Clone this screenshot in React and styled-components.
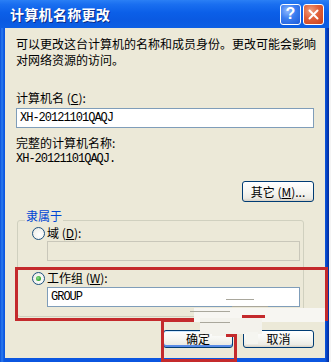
import styled, { createGlobalStyle } from 'styled-components'

const GlobalStyle = createGlobalStyle`
    html, body {
        margin: 0;
        padding: 0;
        background: #f4f4f4;
    }
    body {
        width: 331px;
        height: 362px;
        overflow: hidden;
        font-family: 'Noto Sans CJK SC', 'DejaVu Sans', sans-serif;
        font-size: 12px;
    }
`

const Window = styled.div`
    position: relative;
    width: 329px;
    height: 362px;
    display: flex;
    flex-direction: column;
    background: linear-gradient(90deg, #0a4fd8 0px, #2c7cf0 2px, #0b56e0 4px, #0b56e0 calc(100% - 4px), #002a9c 100%);
    overflow: hidden;
`

const TitleBar = styled.div`
    height: 28px;
    flex: none;
    display: flex;
    align-items: center;
    justify-content: space-between;
    padding: 0 5px 0 10px;
    background: linear-gradient(180deg, #2a7ff5 0%, #1a6ff0 15%, #0b5fe8 45%, #0a5ae2 70%, #0d5fe4 100%);
    box-sizing: border-box;
`

const Title = styled.div`
    color: #ffffff;
    font-weight: 700;
    font-size: 14px;
    letter-spacing: 0.3px;
    text-shadow: 1px 1px 0 #0a2d8a;
`

const TitleButtons = styled.div`
    display: flex;
    gap: 2px;
`

const CaptionButton = styled.div`
    width: 21px;
    height: 21px;
    box-sizing: border-box;
    border: 1px solid #ffffff;
    border-radius: 3px;
    display: flex;
    align-items: center;
    justify-content: center;
    color: #ffffff;
    font-family: 'Liberation Sans', sans-serif;
    font-weight: 700;
    font-size: 16px;
    background: ${p => p.$close
        ? 'radial-gradient(circle at 35% 30%, #f0a080 0%, #e0603a 45%, #c8401c 100%)'
        : 'radial-gradient(circle at 35% 30%, #8fb8ff 0%, #3b7df0 45%, #1c5ad8 100%)'};
`

const Body = styled.div`
    flex: 1;
    margin: 0 4px 4px 5px;
    background: #ece9d8;
    padding: 8px 11px 0 11px;
    display: flex;
    flex-direction: column;
    color: #000000;
`

const Text = styled.div`
    line-height: 16px;
    margin-top: ${p => p.$mt || 0}px;
    white-space: nowrap;
`

const Mono = styled.div`
    font-family: 'Liberation Mono', 'DejaVu Sans Mono', monospace;
    font-size: 12px;
    letter-spacing: -1px;
    line-height: 16px;
    margin-top: ${p => p.$mt || 0}px;
`

const Input = styled.div`
    height: 20px;
    box-sizing: border-box;
    margin-top: ${p => p.$mt || 0}px;
    margin-left: ${p => p.$ml || 0}px;
    width: ${p => p.$w ? `${p.$w}px` : 'auto'};
    border: 1px solid ${p => p.$disabled ? '#c9c7ba' : '#7f9db9'};
    background: ${p => p.$disabled ? '#ece9d8' : '#ffffff'};
    font-family: 'Liberation Mono', 'DejaVu Sans Mono', monospace;
    font-size: 12px;
    letter-spacing: -1px;
    line-height: 18px;
    padding-left: 3px;
`

const ButtonRow = styled.div`
    display: flex;
    justify-content: flex-end;
    gap: ${p => p.$gap || 0}px;
    margin-top: ${p => p.$mt || 0}px;
`

const Button = styled.div`
    width: ${p => p.$w}px;
    height: ${p => p.$h}px;
    box-sizing: border-box;
    border: 1px solid #003c74;
    border-radius: 3px;
    background: linear-gradient(180deg, #ffffff 0%, #f6f6f2 50%, #ecebe4 85%, #d6d0c5 100%);
    box-shadow: ${p => p.$default ? 'inset 0 -2px 0 #5a8ce6, inset 0 1px 0 #cee7ff' : 'none'};
    display: flex;
    align-items: center;
    justify-content: center;
    line-height: 16px;
    white-space: nowrap;
`

const GroupBox = styled.div`
    margin: 18px 10px 0 1px;
    border: 1px solid #d0d0bf;
    border-radius: 3px;
    padding: 0 0 9px 14px;
    display: flex;
    flex-direction: column;
`

const Legend = styled.div`
    align-self: flex-start;
    margin: -13px 0 0 -7px;
    padding: 0 1px;
    background: #ece9d8;
    color: #0046d5;
    line-height: 16px;
`

const RadioRow = styled.div`
    display: flex;
    align-items: center;
    gap: 2px;
    margin-top: ${p => p.$mt || 0}px;
    line-height: 16px;
`

const Radio = styled.span`
    width: 13px;
    height: 13px;
    box-sizing: border-box;
    border-radius: 50%;
    border: 1px solid #1c5180;
    background: radial-gradient(circle at 60% 60%, #ffffff 0%, #f2f2ee 60%, #d8d8d0 100%);
    display: flex;
    align-items: center;
    justify-content: center;

    &::after {
        content: '';
        display: ${p => p.$checked ? 'block' : 'none'};
        width: 5px;
        height: 5px;
        border-radius: 50%;
        background: radial-gradient(circle at 40% 40%, #8ee08e 0%, #2aa02a 70%, #1a7a1a 100%);
    }
`

const Overlay = styled.div`
    position: absolute;
    pointer-events: none;
`

const RedFrame = styled(Overlay)`
    border: 3px solid #c42a2c;
    box-sizing: border-box;
`

const RedBar = styled(Overlay)`
    height: 3px;
    background: #c42a2c;
`

const Smudge = styled(Overlay)`
    background: ${p => p.$bg || '#f7f6f2'};
`

const SmudgeLine = styled(Overlay)`
    height: 1px;
    background: #a9a79c;
`

export default function App() {
    return (
        <>
            <GlobalStyle />
            <Window>
                <TitleBar>
                    <Title>计算机名称更改</Title>
                    <TitleButtons>
                        <CaptionButton>?</CaptionButton>
                        <CaptionButton $close>
                            <svg width="11" height="11" viewBox="0 0 11 11">
                                <path d="M1.5 1.5 L9.5 9.5 M9.5 1.5 L1.5 9.5" stroke="#ffffff" strokeWidth="2" strokeLinecap="round" />
                            </svg>
                        </CaptionButton>
                    </TitleButtons>
                </TitleBar>
                <Body>
                    <Text>可以更改这台计算机的名称和成员身份。更改可能会影响</Text>
                    <Text>对网络资源的访问。</Text>
                    <Text $mt={22}>计算机名 (<u>C</u>):</Text>
                    <Input $mt={2}>XH-20121101QAQJ</Input>
                    <Text $mt={7}>完整的计算机名称:</Text>
                    <Mono>XH-20121101QAQJ.</Mono>
                    <ButtonRow $mt={14}>
                        <Button $w={72} $h={21}>其它 (<u>M</u>)...</Button>
                    </ButtonRow>
                    <GroupBox>
                        <Legend>隶属于</Legend>
                        <RadioRow $mt={1}>
                            <Radio />
                            <span>域 (<u>D</u>):</span>
                        </RadioRow>
                        <Input $disabled $ml={15} $w={253} />
                        <RadioRow $mt={9}>
                            <Radio $checked />
                            <span>工作组 (<u>W</u>):</span>
                        </RadioRow>
                        <Input $mt={1} $ml={15} $w={253}>GROUP</Input>
                    </GroupBox>
                    <ButtonRow $mt={13} $gap={10}>
                        <Button $w={70} $h={18} $default>确定</Button>
                        <Button $w={71} $h={18}>取消</Button>
                    </ButtonRow>
                </Body>

                <RedFrame style={{ left: 15, top: 267, width: 313, height: 54 }} />
                <RedFrame style={{ left: 161, top: 319, width: 76, height: 43 }} />
                <Smudge style={{ left: 194, top: 308, width: 131, height: 14 }} />
                <Smudge style={{ left: 200, top: 318, width: 62, height: 16 }} $bg="#f3f2ec" />
                <Smudge style={{ left: 212, top: 330, width: 14, height: 6 }} $bg="#f3f2ec" />
                <Smudge style={{ left: 246, top: 332, width: 12, height: 12 }} $bg="#f5f5f0" />
                <SmudgeLine style={{ left: 190, top: 311, width: 40 }} />
                <SmudgeLine style={{ left: 232, top: 306, width: 36 }} />
                <SmudgeLine style={{ left: 200, top: 322, width: 30 }} />
                <SmudgeLine style={{ left: 226, top: 299, width: 28 }} />
                <RedBar style={{ left: 242, top: 315, width: 23 }} />
                <RedBar style={{ left: 226, top: 334, width: 11 }} />
            </Window>
        </>
    )
}
